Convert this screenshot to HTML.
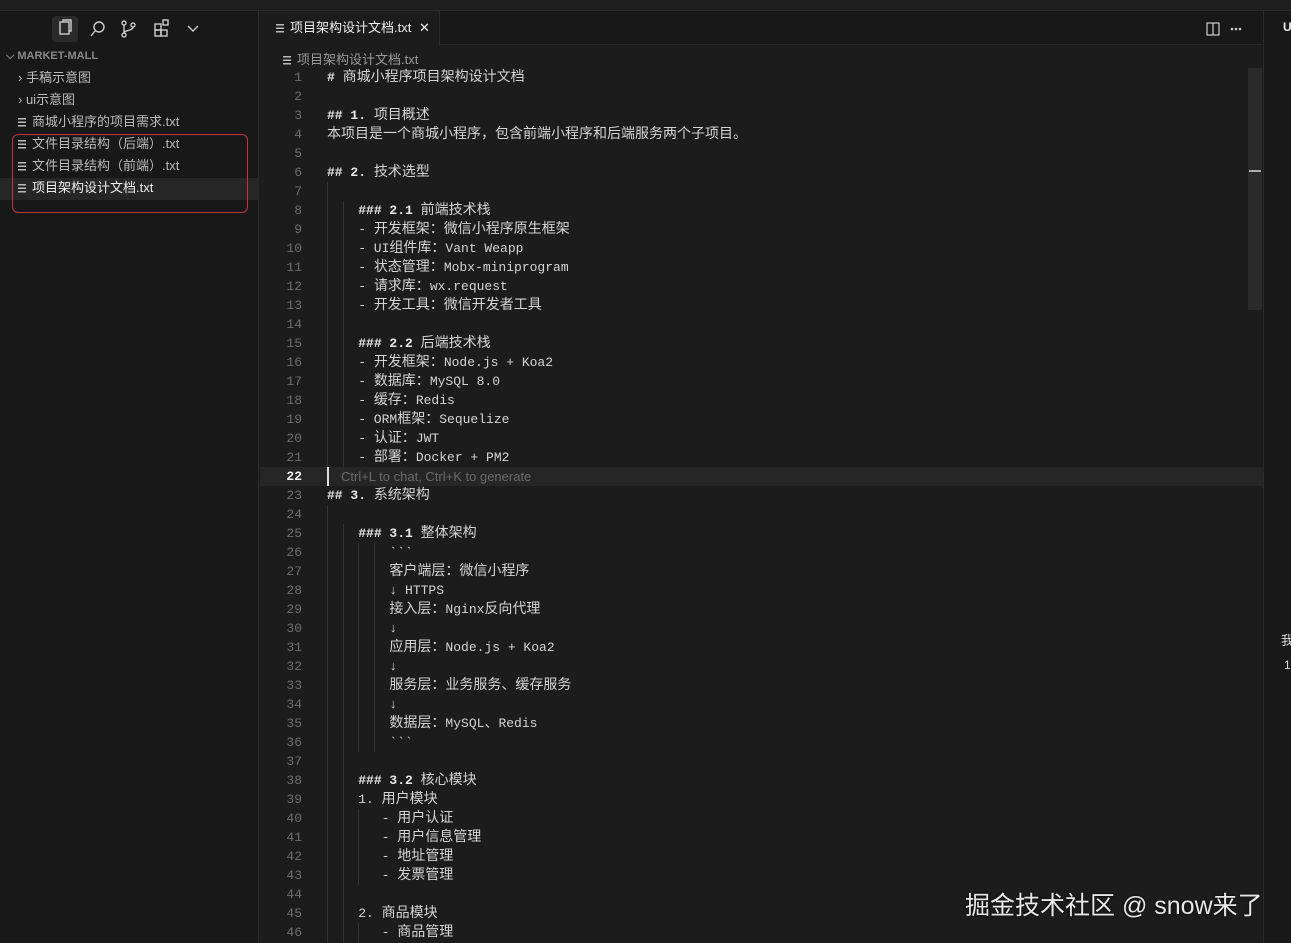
<!DOCTYPE html>
<html><head><meta charset="utf-8"><style>
*{margin:0;padding:0;box-sizing:border-box}
body{width:1291px;height:943px;background:#1c1c1c;overflow:hidden;position:relative;font-family:"Liberation Sans","Noto Sans CJK SC",sans-serif;color:#ccc}
.abs{position:absolute}
.top{left:0;top:0;width:1291px;height:11px;background:#1e1e1e;border-bottom:1px solid #2a2a2a}
.side{left:0;top:11px;width:259px;height:932px;background:#181818;border-right:1px solid #2b2b2b}
.tabs{left:260px;top:11px;width:1003px;height:34px;background:#181818;border-bottom:1px solid #2b2b2b}
.tab{left:260px;top:11px;width:180px;height:35px;background:#1c1c1c;border-right:1px solid #2b2b2b;font-size:13px;color:#eee;line-height:34px;padding-left:16px;white-space:nowrap}
.right{left:1263px;top:11px;width:28px;height:932px;background:#181818;border-left:1px solid #2b2b2b}
.fi{position:absolute;left:18px;font-size:13px;color:#bbb;height:22px;line-height:22px;white-space:nowrap}
.ic{display:inline-block;width:8px;height:9px;margin-right:6px;vertical-align:-1px;background:linear-gradient(#bbb 0 1.5px,transparent 1.5px 3.5px,#bbb 3.5px 5px,transparent 5px 7px,#bbb 7px 8.5px,transparent 8.5px)}
.ln{position:absolute;left:270px;width:32px;text-align:right;font-family:"Liberation Mono",monospace;font-size:13px;color:#6e6e6e;line-height:19px}
.cd{position:absolute;left:327px;font-family:"Liberation Mono","Noto Sans CJK SC",monospace;font-size:13px;color:#d4d4d4;white-space:pre;line-height:19px}
.c{font-size:14px}
.h{color:#e8e8e8;font-weight:bold}
.g{position:absolute;width:1px;background:#333}
</style></head><body>
<div class="abs top"></div>
<div class="abs side"></div>
<div class="abs" style="left:52px;top:16px;width:26px;height:26px;background:#2a2a2a;border-radius:4px"></div>
<svg class="abs" style="left:55px;top:18px" width="160" height="22" fill="none" stroke="#ccc" stroke-width="1.4">
<rect x="5" y="4" width="9" height="12"/><path d="M8 4V2h8v11h-2"/>
<circle cx="44" cy="9" r="5"/><path d="M40 13l-4 5"/>
<circle cx="69" cy="5" r="2"/><circle cx="69" cy="17" r="2"/><circle cx="78" cy="7" r="2"/><path d="M69 7v8M78 9c0 4-9 3-9 6"/>
<rect x="100" y="6" width="6" height="6"/><rect x="100" y="12" width="6" height="6"/><rect x="106" y="12" width="6" height="6"/><rect x="108" y="2" width="5" height="5"/>
<path d="M133 8l5 5 5-5"/>
</svg>
<div class="abs" style="left:6px;top:50px;font-size:11px;color:#888;font-weight:bold">⌵ MARKET-MALL</div>
<div class="fi" style="top:67px">› 手稿示意图</div>
<div class="fi" style="top:89px">› ui示意图</div>
<div class="fi" style="top:111px"><span class="ic"></span>商城小程序的项目需求.txt</div>
<div class="fi" style="top:133px"><span class="ic"></span>文件目录结构（后端）.txt</div>
<div class="fi" style="top:155px"><span class="ic"></span>文件目录结构（前端）.txt</div>
<div class="abs" style="left:0;top:178px;width:259px;height:22px;background:#262626"></div>
<div class="fi" style="top:177px;color:#eee"><span class="ic"></span>项目架构设计文档.txt</div>
<div class="abs" style="left:12px;top:134px;width:236px;height:79px;border:1px solid #c0363a;border-radius:6px"></div>
<div class="abs tabs"></div>
<div class="abs tab"><span class="ic"></span>项目架构设计文档.txt <span style="margin-left:4px">✕</span></div>
<svg class="abs" style="left:1206px;top:21px" width="60" height="16" fill="none" stroke="#ccc" stroke-width="1.2"><rect x="1" y="2" width="12" height="12"/><path d="M7 2v12"/><circle cx="26" cy="8" r=".7"/><circle cx="30" cy="8" r=".7"/><circle cx="34" cy="8" r=".7"/></svg>
<div class="abs right"></div>
<div class="abs" style="left:1283px;top:20px;font-size:12px;color:#eee;font-weight:bold">U</div>
<div class="abs" style="left:283px;top:49px;font-size:13px;color:#999;white-space:nowrap"><span class="ic"></span>项目架构设计文档.txt</div>
<div class="abs" style="left:1248px;top:68px;width:14px;height:242px;background:#2a2a2a"></div>
<div class="abs" style="left:1249px;top:170px;width:12px;height:2px;background:#aaa"></div>
<div class="abs" style="left:260px;top:467px;width:1003px;height:19px;background:#262626"></div>
<div class="abs" style="left:327px;top:467px;width:2px;height:19px;background:#ddd"></div>
<div class="abs" style="left:341px;top:469px;font-size:13px;color:#6a6a6a">Ctrl+L to chat, Ctrl+K to generate</div>
<div class="g" style="left:327px;top:182px;height:285px"></div>
<div class="g" style="left:343px;top:201px;height:266px"></div>
<div class="g" style="left:327px;top:505px;height:438px"></div>
<div class="g" style="left:343px;top:524px;height:419px"></div>
<div class="g" style="left:358px;top:543px;height:209px"></div>
<div class="g" style="left:374px;top:543px;height:209px"></div>
<div class="g" style="left:358px;top:809px;height:76px"></div>
<div class="g" style="left:358px;top:923px;height:20px"></div>

<div class="ln" style="top:68px">1</div><div class="cd" style="top:68px"><span class="h"># </span><span class="c">商城小程序项目架构设计文档</span></div>
<div class="ln" style="top:87px">2</div>
<div class="ln" style="top:106px">3</div><div class="cd" style="top:106px"><span class="h">## 1. </span><span class="c">项目概述</span></div>
<div class="ln" style="top:125px">4</div><div class="cd" style="top:125px"><span class="c">本项目是一个商城小程序，包含前端小程序和后端服务两个子项目。</span></div>
<div class="ln" style="top:144px">5</div>
<div class="ln" style="top:163px">6</div><div class="cd" style="top:163px"><span class="h">## 2. </span><span class="c">技术选型</span></div>
<div class="ln" style="top:182px">7</div>
<div class="ln" style="top:201px">8</div><div class="cd" style="top:201px">    <span class="h">### 2.1 </span><span class="c">前端技术栈</span></div>
<div class="ln" style="top:220px">9</div><div class="cd" style="top:220px">    - <span class="c">开发框架：微信小程序原生框架</span></div>
<div class="ln" style="top:239px">10</div><div class="cd" style="top:239px">    - UI<span class="c">组件库：</span>Vant Weapp</div>
<div class="ln" style="top:258px">11</div><div class="cd" style="top:258px">    - <span class="c">状态管理：</span>Mobx-miniprogram</div>
<div class="ln" style="top:277px">12</div><div class="cd" style="top:277px">    - <span class="c">请求库：</span>wx.request</div>
<div class="ln" style="top:296px">13</div><div class="cd" style="top:296px">    - <span class="c">开发工具：微信开发者工具</span></div>
<div class="ln" style="top:315px">14</div>
<div class="ln" style="top:334px">15</div><div class="cd" style="top:334px">    <span class="h">### 2.2 </span><span class="c">后端技术栈</span></div>
<div class="ln" style="top:353px">16</div><div class="cd" style="top:353px">    - <span class="c">开发框架：</span>Node.js + Koa2</div>
<div class="ln" style="top:372px">17</div><div class="cd" style="top:372px">    - <span class="c">数据库：</span>MySQL 8.0</div>
<div class="ln" style="top:391px">18</div><div class="cd" style="top:391px">    - <span class="c">缓存：</span>Redis</div>
<div class="ln" style="top:410px">19</div><div class="cd" style="top:410px">    - ORM<span class="c">框架：</span>Sequelize</div>
<div class="ln" style="top:429px">20</div><div class="cd" style="top:429px">    - <span class="c">认证：</span>JWT</div>
<div class="ln" style="top:448px">21</div><div class="cd" style="top:448px">    - <span class="c">部署：</span>Docker + PM2</div>
<div class="ln" style="top:467px;color:#eee;font-weight:bold">22</div>
<div class="ln" style="top:486px">23</div><div class="cd" style="top:486px"><span class="h">## 3. </span><span class="c">系统架构</span></div>
<div class="ln" style="top:505px">24</div>
<div class="ln" style="top:524px">25</div><div class="cd" style="top:524px">    <span class="h">### 3.1 </span><span class="c">整体架构</span></div>
<div class="ln" style="top:543px">26</div><div class="cd" style="top:543px">        &#96;&#96;&#96;</div>
<div class="ln" style="top:562px">27</div><div class="cd" style="top:562px">        <span class="c">客户端层：微信小程序</span></div>
<div class="ln" style="top:581px">28</div><div class="cd" style="top:581px">        ↓ HTTPS</div>
<div class="ln" style="top:600px">29</div><div class="cd" style="top:600px">        <span class="c">接入层：</span>Nginx<span class="c">反向代理</span></div>
<div class="ln" style="top:619px">30</div><div class="cd" style="top:619px">        ↓</div>
<div class="ln" style="top:638px">31</div><div class="cd" style="top:638px">        <span class="c">应用层：</span>Node.js + Koa2</div>
<div class="ln" style="top:657px">32</div><div class="cd" style="top:657px">        ↓</div>
<div class="ln" style="top:676px">33</div><div class="cd" style="top:676px">        <span class="c">服务层：业务服务、缓存服务</span></div>
<div class="ln" style="top:695px">34</div><div class="cd" style="top:695px">        ↓</div>
<div class="ln" style="top:714px">35</div><div class="cd" style="top:714px">        <span class="c">数据层：</span>MySQL<span class="c">、</span>Redis</div>
<div class="ln" style="top:733px">36</div><div class="cd" style="top:733px">        &#96;&#96;&#96;</div>
<div class="ln" style="top:752px">37</div>
<div class="ln" style="top:771px">38</div><div class="cd" style="top:771px">    <span class="h">### 3.2 </span><span class="c">核心模块</span></div>
<div class="ln" style="top:790px">39</div><div class="cd" style="top:790px">    1. <span class="c">用户模块</span></div>
<div class="ln" style="top:809px">40</div><div class="cd" style="top:809px">       - <span class="c">用户认证</span></div>
<div class="ln" style="top:828px">41</div><div class="cd" style="top:828px">       - <span class="c">用户信息管理</span></div>
<div class="ln" style="top:847px">42</div><div class="cd" style="top:847px">       - <span class="c">地址管理</span></div>
<div class="ln" style="top:866px">43</div><div class="cd" style="top:866px">       - <span class="c">发票管理</span></div>
<div class="ln" style="top:885px">44</div>
<div class="ln" style="top:904px">45</div><div class="cd" style="top:904px">    2. <span class="c">商品模块</span></div>
<div class="ln" style="top:923px">46</div><div class="cd" style="top:923px">       - <span class="c">商品管理</span></div>

<div class="abs" style="left:1281px;top:630px;font-size:13px;color:#ddd">我</div>
<div class="abs" style="left:1284px;top:658px;font-size:12px;color:#ddd">1</div>
<div class="abs" style="left:965px;top:886px;font-size:25px;color:#e8e8e8;white-space:nowrap;text-shadow:0 0 2px #000">掘金技术社区 @ snow来了</div>
</body></html>
